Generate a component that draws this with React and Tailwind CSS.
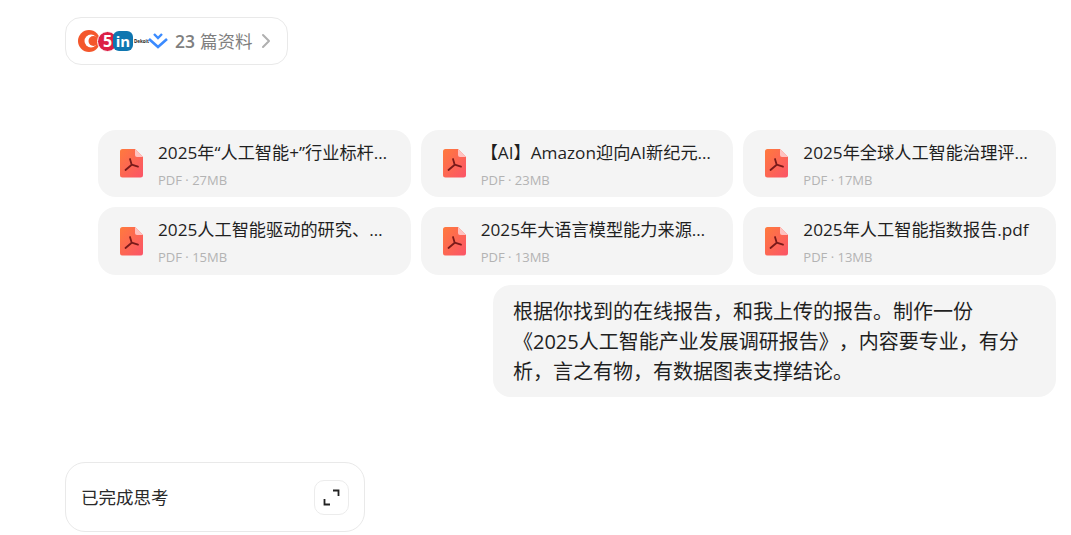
import React from "react";
import { ChevronRight } from "lucide-react";

const files = [
  { name: "2025年“人工智能+”行业标杆案例荟萃.pdf", meta: "PDF · 27MB" },
  { name: "【AI】Amazon迎向AI新纪元报告全文.pdf", meta: "PDF · 23MB" },
  { name: "2025年全球人工智能治理评估指数.pdf", meta: "PDF · 17MB" },
  { name: "2025人工智能驱动的研究、开发与创新报告.pdf", meta: "PDF · 15MB" },
  { name: "2025年大语言模型能力来源与评估报告.pdf", meta: "PDF · 13MB" },
  { name: "2025年人工智能指数报告.pdf", meta: "PDF · 13MB" },
];

const PdfIcon = () => (
  <svg width="23" height="29" viewBox="0 0 23 29" className="shrink-0">
    <defs>
      <linearGradient id="pdfGrad" x1="0" y1="0" x2="1" y2="1">
        <stop offset="0" stopColor="#ff7a3d" />
        <stop offset="1" stopColor="#fb5468" />
      </linearGradient>
    </defs>
    <path d="M2.5 0H15L23 8V26A2.5 2.5 0 0 1 20.5 28.5H2.5A2.5 2.5 0 0 1 0 26V2.5A2.5 2.5 0 0 1 2.5 0Z" fill="url(#pdfGrad)" />
    <path d="M15 0L23 8H17A2 2 0 0 1 15 6Z" fill="#ffc2c0" />
    <path d="M10 10L11.7 15.7L5.5 21M11.7 15.7L18 17.7" fill="none" stroke="#7a1a1a" strokeWidth="1.8" strokeLinecap="round" strokeLinejoin="round" />
  </svg>
);

const SourceIcons = () => (
  <div className="flex items-center w-[91px]">
    <svg width="22" height="22" viewBox="0 0 22 22" className="shrink-0">
      <circle cx="11" cy="11" r="11" fill="#f4572c" />
      <circle cx="13" cy="11" r="6.5" fill="#fff" />
      <circle cx="15.5" cy="11" r="5" fill="#f4572c" />
    </svg>
    <div className="w-[21px] h-[21px] shrink-0 -ml-[3px] rounded-full bg-[#dc1f45] border border-white flex items-center justify-center text-white text-[16px] font-bold leading-none">5</div>
    <div className="w-[20px] h-[20px] shrink-0 -ml-[5px] rounded-[6px] bg-[#0f76b0] flex items-center justify-center text-white text-[15px] font-bold leading-none">in</div>
    <span className="ml-[1px] w-[14px] shrink-0 text-[4.5px] font-bold text-[#222] leading-none">Dekoit</span>
    <svg width="22" height="18" viewBox="0 0 22 18" className="-ml-[1px] shrink-0">
      <path d="M2 7L11 15L20 7" fill="none" stroke="#3b8bff" strokeWidth="2.6" />
      <path d="M7 2L11 6L15 2" fill="none" stroke="#3b8bff" strokeWidth="2.4" />
    </svg>
  </div>
);

const FileCard = ({ file }) => (
  <div className="bg-[#f4f4f4] rounded-[18px] flex items-center pl-[22px] pr-[14px] gap-[15px] min-w-0">
    <PdfIcon />
    <div className="min-w-0 flex-1 pt-[2px]">
      <div className="truncate text-[17.2px] leading-[24px] text-[#1f1f1f]">{file.name}</div>
      <div className="text-[13px] leading-[18px] mt-[6px] text-[#b3b3b3]">{file.meta}</div>
    </div>
  </div>
);

export default function App() {
  return (
    <div
      className="w-[1071px] h-[535px] overflow-hidden bg-white pt-[17px] pl-[65px] pr-[15px]"
      style={{ fontFamily: '"Open Sans", "Noto Sans CJK SC", sans-serif' }}
    >
      <div className="w-[223px] h-[48px] border border-[#e9e9e9] rounded-[16px] flex items-center pl-[12px]">
        <SourceIcons />
        <span className="ml-[6px] text-[17.5px] text-[#7f7f7f] font-semibold">23</span>
        <span className="ml-[5px] text-[17.5px] text-[#7f7f7f]">篇资料</span>
        <ChevronRight size={24} strokeWidth={2} className="ml-[1px] text-[#b0b0b0]" />
      </div>

      <div className="mt-[65px] ml-[33px] grid grid-cols-3 grid-rows-[67px_68px] gap-[10px]">
        {files.map((f) => (
          <FileCard key={f.name} file={f} />
        ))}
      </div>

      <div className="mt-[10px] flex justify-end">
        <div className="w-[563px] h-[112px] bg-[#f4f4f4] rounded-[18px] px-[20px] py-[12px] text-[20px] leading-[30px] text-[#1f1f1f] [text-spacing-trim:space-all]">
          根据你找到的在线报告，和我上传的报告。制作一份《2025人工智能产业发展调研报告》，内容要专业，有分析，言之有物，有数据图表支撑结论。
        </div>
      </div>

      <div className="mt-[65px] w-[300px] h-[70px] border border-[#e9e9e9] rounded-[20px] flex items-center justify-between pl-[15px] pr-[15px]">
        <span className="text-[17.5px] text-[#2a2a2a]">已完成思考</span>
        <div className="w-[35px] h-[35px] border border-[#ececec] rounded-[10px] flex items-center justify-center">
          <svg width="17" height="17" viewBox="0 0 17 17" fill="none" stroke="#222" strokeWidth="1.8">
            <path d="M10 1.5H15.5V7" />
            <path d="M1.5 10V15.5H7" />
          </svg>
        </div>
      </div>
    </div>
  );
}
